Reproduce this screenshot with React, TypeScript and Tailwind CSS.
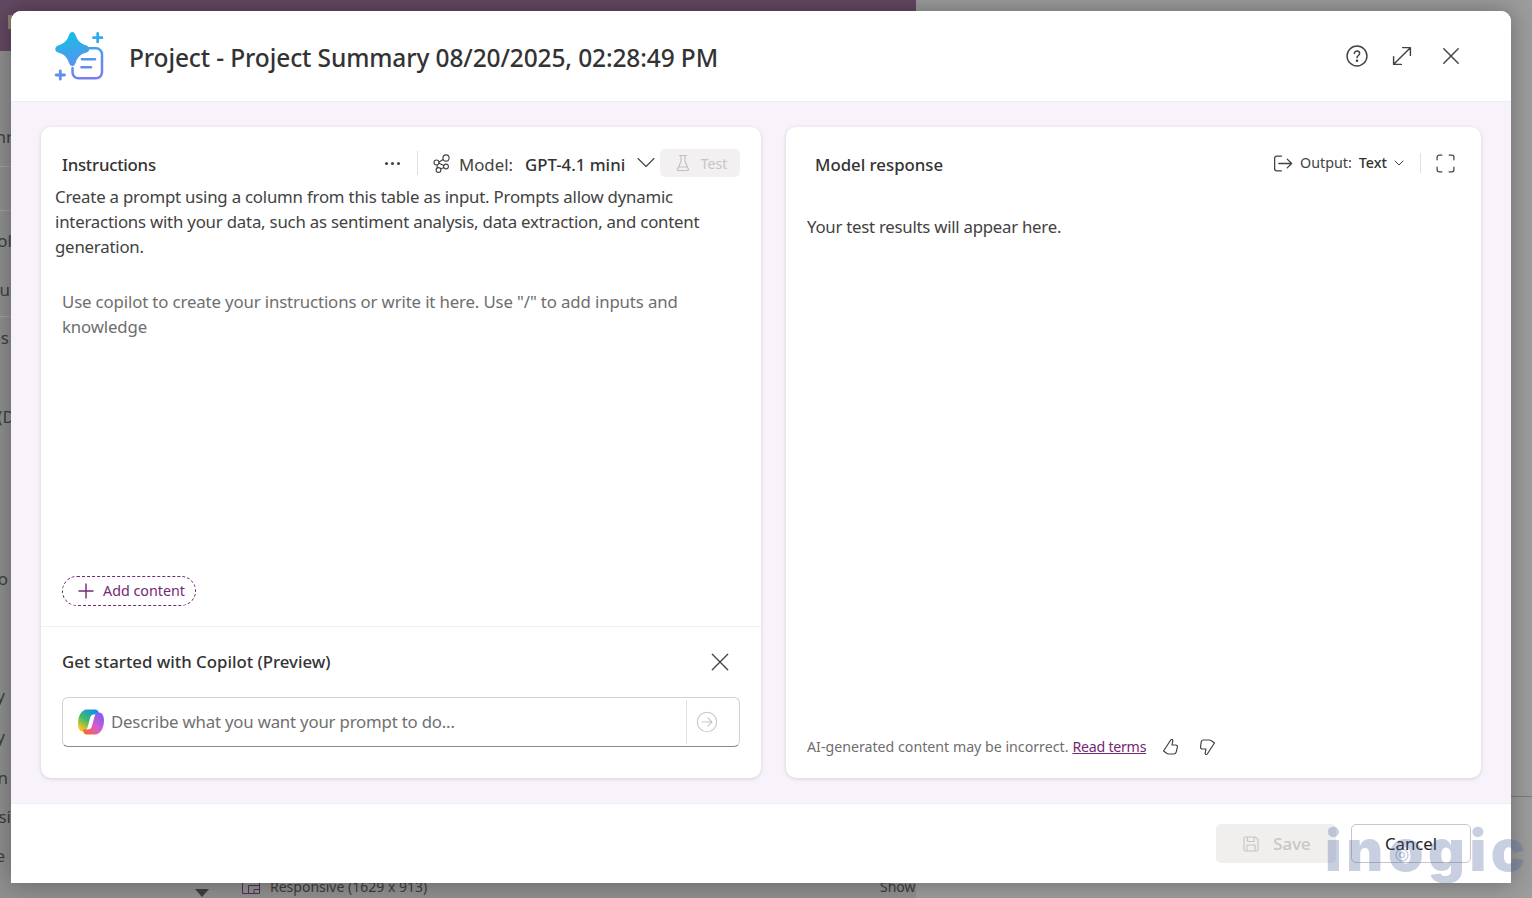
import React from "react";

function Logo() {
  return (
    <svg width="52" height="52" viewBox="0 0 52 52" fill="none">
      <defs>
        <linearGradient id="lg1" x1="20" y1="2" x2="36" y2="50" gradientUnits="userSpaceOnUse">
          <stop stopColor="#17BDE6" />
          <stop offset="1" stopColor="#7C7CF2" />
        </linearGradient>
      </defs>
      <path d="M20.300 2C22 2 23 3.300 23.700 5.300C25.200 10.200 28.500 13.800 34.500 15.400C36.300 16 37.300 17.300 37.300 19C37.300 20.700 36.300 22 34.500 22.600C28.500 24.200 25.200 27.800 23.700 32.700C23 34.700 22 36 20.300 36C18.600 36 17.600 34.700 16.900 32.700C15.400 27.800 12.100 24.200 6.100 22.600C4.300 22 3.300 20.700 3.300 19C3.300 17.300 4.300 16 6.100 15.400C12.100 13.800 15.400 10.200 16.900 5.300C17.600 3.300 18.600 2 20.300 2Z" fill="url(#lg1)" />
      <path d="M37 18.300H44a6 6 0 0 1 6 6V42.300a6 6 0 0 1-6 6H26.500a6 6 0 0 1-6-6V38" stroke="url(#lg1)" strokeWidth="2.500" strokeLinecap="round" />
      <path d="M30 29.300H43M29.500 37.300H39" stroke="url(#lg1)" strokeWidth="2.600" strokeLinecap="round" />
      <path d="M45.700 3.500v8.400M41.500 7.700h8.400M8.300 40.800v8.400M4.100 45h8.400" stroke="url(#lg1)" strokeWidth="2.800" strokeLinecap="round" />
    </svg>
  );
}

function CopilotLogo() {
  const d = "M10 1.500h8.500c1.500 0 2.500 1 3 2.500l.7 2.500h-5.200c-2 0-3.200 1-3.800 3l-2.700 10c-.6 2.200-2 4-4.500 4C2.800 23.500 1 20 1 15.500 1 8 4.500 1.500 10 1.500z";
  return (
    <svg width="28" height="28" viewBox="0 0 28 28" fill="none">
      <defs>
        <linearGradient id="cp1" x1="4" y1="20" x2="16" y2="2" gradientUnits="userSpaceOnUse">
          <stop stopColor="#F4C21F" />
          <stop offset=".45" stopColor="#3DBB6C" />
          <stop offset="1" stopColor="#1A8FE8" />
        </linearGradient>
        <linearGradient id="cp2" x1="20" y1="3" x2="4" y2="20" gradientUnits="userSpaceOnUse">
          <stop stopColor="#F5672F" />
          <stop offset=".5" stopColor="#D85BCB" />
          <stop offset="1" stopColor="#8B5CF0" />
        </linearGradient>
      </defs>
      <path d={d} fill="url(#cp1)" />
      <path d={d} fill="url(#cp2)" transform="rotate(180 14 14)" />
    </svg>
  );
}

function Stroke({ size, children, color = "#424242", width = 1.2, box = 20 }: { size: number; children: React.ReactNode; color?: string; width?: number; box?: number }) {
  return (
    <svg width={size} height={size} viewBox={`0 0 ${box} ${box}`} fill="none" stroke={color} strokeWidth={width} strokeLinecap="round" strokeLinejoin="round">
      {children}
    </svg>
  );
}

function Backdrop() {
  const rows: [number, string, number][] = [
    [137, "nr", 13], [241, "ol", 12], [290, "u", 10], [338, "es", 9], [417, "(D", 15], [579, "o", 8], [696, "y", 5], [737, "y", 5], [778, "n", 8], [817, "si", 11], [856, "e", 5],
  ];
  return (
    <div className="absolute inset-0 overflow-hidden bg-[#9c9c9c]">
      <div className="relative h-[51px] w-[916px] bg-[#634862]">
        <div className="absolute left-[8px] top-[15px] h-[14px] w-[4px] bg-[#8f8474]" />
      </div>
      <div className="absolute left-0 top-[51px] h-[847px] w-[916px] bg-[#8f8f8f]" />
      <div className="absolute left-0 top-[166px] h-px w-[12px] bg-[#a0a0a0]" />
      <div className="absolute left-0 top-[210px] h-px w-[12px] bg-[#a0a0a0]" />
      <div className="absolute left-0 top-[316px] h-px w-[12px] bg-[#a0a0a0]" />
      <div className="absolute right-0 top-[796px] h-px w-[21px] bg-[#7c7c7c]" />
      {rows.map(([y, t, edge]) => (
        <div key={y} className="absolute whitespace-nowrap text-[17px] leading-[20px] text-[#3f3f3f]" style={{ top: y - 10, right: 1532 - edge }}>{t}</div>
      ))}
      <div className="absolute left-[242px] top-[878px] flex items-center gap-[10px] text-[14px] leading-[18px] text-[#3c3c3c]">
        <svg width="18" height="14" viewBox="0 0 18 14" fill="none" stroke="#4f2f54" strokeWidth="1"><path d="M.5.5h17v13H.5zM6.500 13.500V5.500h11M12 13.500V9.500h5.500" /></svg>
        <span>Responsive (1629 x 913)</span>
      </div>
      <div className="absolute left-[880px] top-[878px] text-[14px] leading-[18px] text-[#3c3c3c]">Show</div>
      <div className="absolute left-[195px] top-[889px] h-0 w-0 border-x-[7px] border-t-[8px] border-x-transparent border-t-[#3f3f3f]" />
    </div>
  );
}

function Header() {
  return (
    <div className="flex h-[91px] shrink-0 items-center border-b border-[#f0edf0] bg-white pl-[41px] pr-[48px]">
      <Logo />
      <h1 className="ml-[25px] mt-[4px] flex-1 whitespace-nowrap text-[24.500px] font-medium leading-[32px] tracking-[-0.12px] text-[#333333]">
        Project - Project Summary 08/20/2025, 02:28:49 PM
      </h1>
      <div className="flex items-center gap-[21px]">
        <Stroke size={24}>
          <circle cx="10" cy="10" r="8.300" />
          <path d="M7.800 8c0-1.300 1-2.200 2.200-2.200s2.200.9 2.200 2.100c0 1.700-2.200 1.800-2.200 3.600" />
          <circle cx="10" cy="14" r=".5" fill="#424242" />
        </Stroke>
        <Stroke size={24}>
          <path d="M3 10.500V17h6.500M17 9.500V3h-6.500M3.300 16.700 16.700 3.300" />
        </Stroke>
        <div className="ml-[4px]">
          <Stroke size={24}><path d="M4 4l12 12M16 4 4 16" /></Stroke>
        </div>
      </div>
    </div>
  );
}

function LeftCard() {
  return (
    <section className="flex w-[720px] flex-col rounded-[10px] bg-white shadow-[0_1px_4px_rgba(0,0,0,0.14)]">
      <div className="flex flex-1 flex-col">
        <div className="box-content flex h-[36px] items-center px-[21px] pt-[20px]">
          <span className="w-[94px] whitespace-nowrap text-[16.800px] font-medium leading-[24px] tracking-[-0.25px] text-[#333333]">Instructions</span>
          <div className="mt-[-4px] flex items-center">
            <span className="ml-[229px] flex h-[20px] items-center gap-[3px]">
              <i className="h-[3px] w-[3px] rounded-full bg-[#424242]" />
              <i className="h-[3px] w-[3px] rounded-full bg-[#424242]" />
              <i className="h-[3px] w-[3px] rounded-full bg-[#424242]" />
            </span>
            <span className="ml-[17px] h-[24px] w-px bg-[#e0e0e0]" />
            <span className="ml-[14px]">
              <Stroke size={20} width={1.1}>
                <circle cx="14" cy="5" r="3.100" /><circle cx="4.500" cy="9.500" r="2.500" /><circle cx="6.500" cy="17" r="2.400" /><circle cx="14" cy="13.500" r="2.400" />
                <path d="M7 9l4.200-2.500M7 10.300l4.700 2.200M5.200 12v2.700M8.700 16l3.200-1.400" />
              </Stroke>
            </span>
          </div>
          <span className="ml-[7px] w-[54px] text-[16.800px] leading-[24px] text-[#424242]">Model:</span>
          <span className="ml-[12px] w-[100px] whitespace-nowrap text-[16.800px] font-medium leading-[24px] text-[#333333]">GPT-4.1 mini</span>
          <span className="ml-[11px] mt-[-4px]">
            <Stroke size={20} width={1.1}><path d="M2 5.500l8 8 8-8" /></Stroke>
          </span>
          <button className="ml-[4px] mt-[-4px] flex h-[28px] w-[80px] shrink-0 items-center justify-center gap-[8px] rounded-[5px] bg-[#f2f0f0] text-[14px] text-[#c8c6c4]">
            <Stroke size={20} color="#c4c2c0" width={1.200}><path d="M6.500 2.500h7M8 2.500v6L4.500 16.500a.8.8 0 0 0 .7 1h9.600a.8.8 0 0 0 .7-1L12 8.500v-6M6.500 14h7" /></Stroke>
            Test
          </button>
        </div>
        <p className="mt-[1px] pl-[14px] pr-[50px] text-[16.800px] leading-[25px] tracking-[-0.2px] text-[#424242]">
          Create a prompt using a column from this table as input. Prompts allow dynamic interactions with your data, such as sentiment analysis, data extraction, and content generation.
        </p>
        <p className="mt-[30px] pl-[21px] pr-[50px] text-[16.800px] leading-[25px] tracking-[-0.13px] text-[#6e6e6e]">
          Use copilot to create your instructions or write it here. Use "/" to add inputs and knowledge
        </p>
        <div className="mt-auto pb-[20px] pl-[21px]">
          <button className="flex h-[30px] w-[134px] items-center gap-[8px] rounded-full border border-dashed border-[#742774] pl-[14px] text-[14.300px] leading-[20px] text-[#742774]">
            <Stroke size={18} color="#742774" width={1.400} box={18}><path d="M9 2v14M2 9h14" /></Stroke>
            Add content
          </button>
        </div>
      </div>
      <div className="h-[152px] shrink-0 border-t border-[#f0f0f0] px-[21px]">
        <div className="flex h-[70px] items-center justify-between pr-[9px]">
          <span className="text-[16.800px] font-medium leading-[24px] text-[#333333]">Get started with Copilot (Preview)</span>
          <Stroke size={22}><path d="M3 3l14 14M17 3 3 17" /></Stroke>
        </div>
        <div className="flex h-[50px] items-center rounded-[6px] border border-[#d1d1d1] border-b-[#8a8a8a]">
          <span className="ml-[14px]"><CopilotLogo /></span>
          <span className="ml-[6px] flex-1 whitespace-nowrap text-[16.800px] leading-[24px] tracking-[-0.19px] text-[#707070]">Describe what you want your prompt to do...</span>
          <span className="flex h-[44px] w-[53px] items-center justify-center border-l border-[#e0e0e0] pr-[13px]">
            <Stroke size={22} color="#c8c6c4" width={1}>
              <circle cx="10" cy="10" r="8.800" /><path d="M5.500 10h9M10.800 6.300 14.500 10l-3.700 3.700" />
            </Stroke>
          </span>
        </div>
      </div>
    </section>
  );
}

function RightCard() {
  return (
    <section className="flex w-[695px] flex-col rounded-[10px] bg-white pl-[21px] pr-[25px] shadow-[0_1px_4px_rgba(0,0,0,0.14)]">
      <div className="box-content flex h-[36px] items-center pt-[20px]">
        <span className="ml-[8px] flex-1 text-[16.800px] font-medium leading-[24px] text-[#333333]">Model response</span>
        <div className="mt-[-4px] flex items-center">
          <Stroke size={21}>
            <path d="M9 3H4.500A2 2 0 0 0 2.500 5v10a2 2 0 0 0 2 2H9M6.500 10h12M14.500 5.800 18.700 10l-4.200 4.200" />
          </Stroke>
          <span className="ml-[7px] text-[14.300px] leading-[20px] text-[#424242]">Output:</span>
          <span className="ml-[7px] text-[14.300px] font-medium leading-[20px] text-[#333333]">Text</span>
          <span className="ml-[6px]"><Stroke size={12} box={12} width={1}><path d="M2 4l4 4 4-4" /></Stroke></span>
          <span className="ml-[15px] h-[20px] w-px bg-[#e0e0e0]" />
          <span className="ml-[14px]">
            <Stroke size={21}><path d="M2 6.500V4a2 2 0 0 1 2-2h2.500M13.500 2H16a2 2 0 0 1 2 2v2.500M18 13.500V16a2 2 0 0 1-2 2h-2.500M6.500 18H4a2 2 0 0 1-2-2v-2.500" /></Stroke>
          </span>
        </div>
      </div>
      <p className="mt-[31px] text-[16.800px] leading-[25px] tracking-[-0.25px] text-[#424242]">Your test results will appear here.</p>
      <div className="mb-[15px] mt-auto flex h-[32px] items-center pb-[1px]">
        <span className="whitespace-nowrap text-[14.200px] leading-[20px] text-[#6e6e6e]">AI-generated content may be incorrect.</span>
        <a className="ml-[4px] whitespace-nowrap text-[14.200px] leading-[20px] tracking-[-0.25px] text-[#742774] underline">Read terms</a>
        <span className="ml-[14px]">
          <Stroke size={20}><path d="M6.500 9.500 10.700 3c.8-1 2.300-.3 2.100 1L12 8h3.700c1.200 0 2 1.100 1.700 2.200l-1.200 4.900c-.3 1-1 1.900-2.200 1.900H8.800c-1 0-1.800-.5-2.500-1L3.500 14 6.500 9.500z" /></Stroke>
        </span>
        <span className="ml-[18px]">
          <Stroke size={20}><path d="M13.500 10.500 9.300 17c-.8 1-2.300.3-2.100-1L8 12H4.300c-1.200 0-2-1.100-1.700-2.200l.6-4.900C3.500 3.900 4.200 3 5.400 3h5.800c1 0 1.800.5 2.500 1l2.800 2-3 4.500z" /></Stroke>
        </span>
      </div>
    </section>
  );
}

function Footer() {
  return (
    <div className="flex h-[80px] shrink-0 items-start justify-end gap-[15px] border-t border-[#f0edf0] bg-white pr-[40px] pt-[20px]">
      <button className="flex h-[39px] w-[120px] items-center justify-center gap-[12px] rounded-[5px] bg-[#f0efee] text-[16.800px] font-medium text-[#c8c6c4]">
        <Stroke size={20} color="#c8c6c4"><path d="M3 4.500A1.500 1.500 0 0 1 4.500 3h9.800L17 5.700v9.800a1.500 1.500 0 0 1-1.500 1.500h-11A1.500 1.500 0 0 1 3 15.500zM6.500 3v4.500h6.500V3M6 17v-6h8v6" /></Stroke>
        Save
      </button>
      <button className="flex h-[39px] w-[120px] items-center justify-center rounded-[5px] border border-[#c8c6c4] bg-white text-[16.800px] text-[#242424]">
        Cancel
      </button>
    </div>
  );
}

export default function App() {
  return (
    <div className="relative h-[898px] w-full overflow-hidden font-['Noto_Sans','Open_Sans',sans-serif]">
      <Backdrop />
      <div className="absolute left-[11px] top-[11px] flex h-[872px] w-[1500px] flex-col overflow-hidden rounded-t-[10px] bg-white shadow-[0_0_24px_rgba(0,0,0,0.32)]">
        <Header />
        <div className="flex min-h-0 flex-1 gap-[25px] bg-[#f8f2fa] px-[30px] pb-[25px] pt-[25px]">
          <LeftCard />
          <RightCard />
        </div>
        <Footer />
      </div>
      <div className="pointer-events-none absolute left-[1325px] top-[811px] whitespace-nowrap font-['Inter',sans-serif] text-[57px] font-black leading-[80px] tracking-[4.500px] text-[#4a5f9d]/30">
        inogic
      </div>
      <svg className="pointer-events-none absolute left-[1394px] top-[847px]" width="16" height="16" viewBox="0 0 16 16" fill="none" stroke="#4a5f9d" strokeOpacity=".3" strokeWidth="1.500">
        <circle cx="8" cy="8" r="6" />
        <circle cx="8" cy="8" r="2.500" />
      </svg>
    </div>
  );
}
